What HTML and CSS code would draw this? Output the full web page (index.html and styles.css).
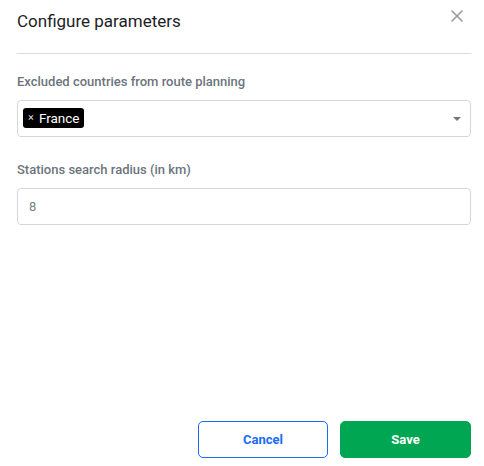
FILE: index.html
```html
<!DOCTYPE html>
<html>
<head>
<meta charset="utf-8">
<link rel="stylesheet" href="styles.css">
</head>
<body>
<div class="modal">
  <div class="header">
    <h1 class="title">Configure parameters</h1>
    <button class="close" aria-label="Close">
      <svg width="12" height="12" viewBox="0 0 12 12"><path d="M1 1L11 11M11 1L1 11" stroke="#9a9a9a" stroke-width="1.6" stroke-linecap="round"/></svg>
    </button>
  </div>
  <div class="body">
    <div class="field">
      <label class="label">Excluded countries from route planning</label>
      <div class="select">
        <span class="chip"><span class="chip-x">×</span>France</span>
        <span class="caret"></span>
      </div>
    </div>
    <div class="field">
      <label class="label">Stations search radius (in km)</label>
      <div class="input">8</div>
    </div>
  </div>
  <div class="footer">
    <button class="btn btn-cancel">Cancel</button>
    <button class="btn btn-save">Save</button>
  </div>
</div>
</body>
</html>
```
FILE: styles.css
```css
html, body {
  margin: 0;
  padding: 0;
  background: #fff;
}
body {
  font-family: Roboto, "Liberation Sans", sans-serif;
  color: #212529;
  width: 484px;
  height: 466px;
}
.modal {
  box-sizing: border-box;
  height: 466px;
  padding: 0 13px 0 17px;
  display: flex;
  flex-direction: column;
}
.header {
  display: flex;
  justify-content: space-between;
  align-items: flex-start;
  height: 53px;
  border-bottom: 1px solid #dcdcdc;
}
.title {
  margin: 9px 0 0;
  font-size: 17px;
  font-weight: 400;
  line-height: 24px;
  color: #1d1d1f;
}
.close {
  border: none;
  background: none;
  padding: 0;
  margin: 10px 8px 0 0;
  width: 12px;
  height: 12px;
  display: flex;
}
.body {
  display: flex;
  flex-direction: column;
  gap: 24px;
  padding-top: 19px;
  flex: 1;
}
.field {
  display: flex;
  flex-direction: column;
  gap: 9px;
}
.label {
  font-size: 13px;
  font-weight: 500;
  line-height: 18px;
  color: #6c757d;
}
.select, .input {
  box-sizing: border-box;
  height: 37px;
  border: 1px solid #d4d8dd;
  border-radius: 4px;
  display: flex;
  align-items: center;
}
.select {
  padding: 0 8px 0 5px;
  justify-content: space-between;
}
.chip {
  background: #000;
  color: #fff;
  border-radius: 3px;
  height: 20px;
  padding: 0 4px 0 5px;
  display: inline-flex;
  align-items: center;
  font-size: 13.5px;
  font-weight: 400;
  gap: 5px;
  margin-top: -2px;
}
.chip-x {
  font-size: 11px;
  color: #ddd;
}
.caret {
  width: 0;
  height: 0;
  border-left: 4px solid transparent;
  border-right: 4px solid transparent;
  border-top: 4px solid #777;
  margin-right: 1px;
}
.input {
  padding: 0 11px;
  font-size: 13px;
  color: #7a8087;
}
.footer {
  display: flex;
  justify-content: flex-end;
  gap: 12px;
  padding-bottom: 8px;
}
.btn {
  box-sizing: border-box;
  width: 131px;
  height: 37px;
  border-radius: 5px;
  font-family: Roboto, "Liberation Sans", sans-serif;
  font-size: 13px;
  font-weight: 700;
}
.btn-cancel {
  width: 130px;
  background: #fff;
  border: 1px solid #1a6cf5;
  color: #1a6cf5;
}
.btn-save {
  background: #00a651;
  border: 1px solid #00a651;
  color: #fff;
}
```
